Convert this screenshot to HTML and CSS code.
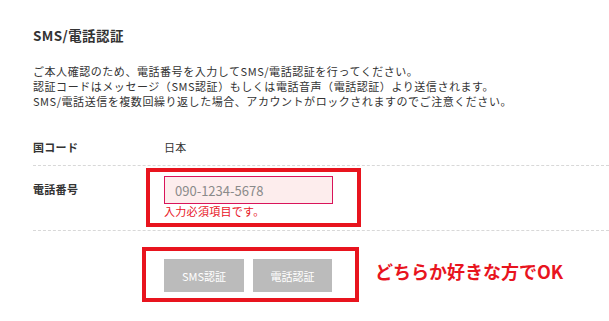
FILE: index.html
```html
<!DOCTYPE html>
<html lang="ja">
<head>
<meta charset="utf-8">
<title>SMS/電話認証</title>
<link rel="stylesheet" href="styles.css">
</head>
<body>
<div class="page">
  <h2 class="title">SMS/電話認証</h2>
  <p class="desc">ご本人確認のため、電話番号を入力してSMS/電話認証を行ってください。<br>認証コードはメッセージ（SMS認証）もしくは電話音声（電話認証）より送信されます。<br>SMS/電話送信を複数回繰り返した場合、アカウントがロックされますのでご注意ください。</p>
  <div class="form">
    <div class="row row-country">
      <div class="label">国コード</div>
      <div class="value">日本</div>
    </div>
    <div class="row row-phone">
      <div class="label">電話番号</div>
      <div class="value">
        <input class="phone" type="text" placeholder="090-1234-5678">
        <div class="error">入力必須項目です。</div>
      </div>
    </div>
    <div class="actions">
      <button class="btn" type="button">SMS認証</button>
      <button class="btn" type="button">電話認証</button>
      <span class="note">どちらか好きな方でOK</span>
    </div>
  </div>
  <div class="mark mark-input"></div>
  <div class="mark mark-buttons"></div>
</div>
</body>
</html>
```
FILE: styles.css
```css
html, body {
  margin: 0;
  padding: 0;
  background: #fff;
}
body {
  font-family: "Noto Sans CJK JP", "Noto Sans", sans-serif;
  color: #333;
  font-size: 11px;
}
.page {
  position: relative;
  width: 609px;
  height: 321px;
  padding: 26px 0 0 33px;
  box-sizing: border-box;
  overflow: hidden;
}
.title {
  margin: 0;
  font-size: 13.5px;
  line-height: 18px;
  font-weight: bold;
  letter-spacing: 0.4px;
  color: #333;
}
.desc {
  margin: 20px 0 0;
  font-size: 11px;
  line-height: 15px;
  letter-spacing: 0.55px;
}
.form {
  margin-top: 21px;
}
.row {
  display: flex;
  border-bottom: 1px dashed #d8d8d8;
}
.label {
  width: 131px;
  flex: none;
  font-weight: bold;
  line-height: 15px;
  letter-spacing: 0.3px;
}
.value {
  line-height: 15px;
  letter-spacing: 0.3px;
}
.row-country {
  padding: 10px 0 10px;
  height: 15px;
}
.row-phone {
  padding: 10px 0 12px;
}
.row-phone .label {
  padding-top: 6px;
}
.phone {
  display: block;
  width: 169px;
  height: 28px;
  box-sizing: border-box;
  border: 1px solid #d9145a;
  background: #fdeded;
  padding: 0 10px;
  margin: 0;
  font-family: "Noto Sans CJK JP", "Noto Sans", sans-serif;
  font-size: 13px;
  color: #333;
  outline: none;
}
.phone::placeholder {
  color: #8a8a8a;
}
.error {
  color: #e8141e;
  line-height: 14px;
  margin-top: 0;
  letter-spacing: 0.3px;
}
.actions {
  display: flex;
  align-items: flex-start;
  padding: 28px 0 0 131px;
}
.btn {
  width: 80px;
  height: 33px;
  border: 0;
  margin: 0 9px 0 0;
  padding: 0;
  background: #bbbbbb;
  color: #fff;
  font-family: "Noto Sans CJK JP", "Noto Sans", sans-serif;
  font-size: 11px;
}
.btn + .btn {
  width: 79px;
}
.note {
  margin-left: 34px;
  color: #e8141e;
  font-weight: bold;
  font-size: 18px;
  line-height: 24px;
}
.mark {
  position: absolute;
  border: 4px solid #e8141e;
  box-sizing: border-box;
}
.mark-input {
  left: 146px;
  top: 168px;
  width: 215px;
  height: 59px;
}
.mark-buttons {
  left: 142px;
  top: 247px;
  width: 217px;
  height: 55px;
}
```
